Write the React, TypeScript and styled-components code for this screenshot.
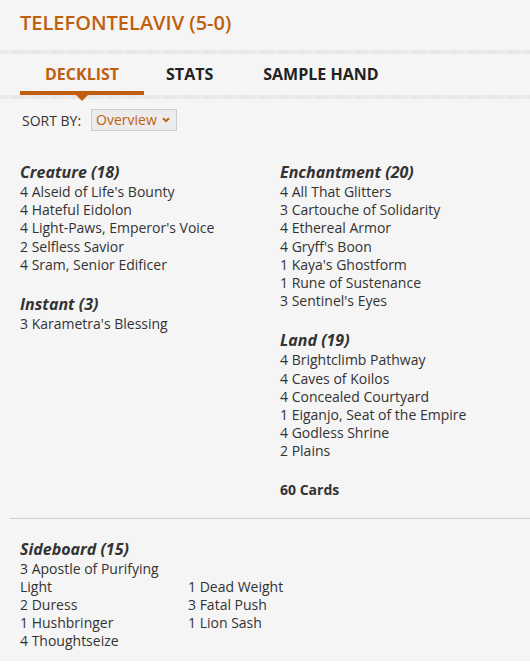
import React from "react";
import styled, { createGlobalStyle } from "styled-components";

const Global = createGlobalStyle`
  html, body { margin: 0; padding: 0; background: #ffffff; }
  body { font-family: "Open Sans", "Noto Sans", sans-serif; color: #333; }
  * { box-sizing: border-box; }
`;

const ORANGE = "#c0600f";

const Page = styled.div`
  background: #f5f5f5;
  padding-bottom: 10px;
`;

const Title = styled.h1`
  margin: 0;
  padding: 10px 20px 14px;
  font-size: 20px;
  line-height: 26px;
  font-weight: 600;
  color: ${ORANGE};
`;

const Band = styled.div`
  height: 4px;
  background: repeating-linear-gradient(90deg, #e9e9e9 0 7px, #ececec 7px 13px, #e7e7e7 13px 19px);
`;

const Tabs = styled.nav`
  display: flex;
  padding-left: 20px;
`;

const Tab = styled.div<{ $active?: boolean; $pad: number }>`
  position: relative;
  padding: 9px ${(p) => p.$pad}px 6px;
  font-size: 16px;
  line-height: 22px;
  font-weight: 700;
  color: ${(p) => (p.$active ? ORANGE : "#222")};
  border-bottom: 4px solid ${(p) => (p.$active ? ORANGE : "transparent")};
  &::after {
    content: "";
    display: ${(p) => (p.$active ? "block" : "none")};
    position: absolute;
    left: 50%;
    bottom: -10px;
    margin-left: -6px;
    border-left: 6px solid transparent;
    border-right: 6px solid transparent;
    border-top: 6px solid ${ORANGE};
    z-index: 1;
  }
`;

const SortRow = styled.div`
  display: flex;
  align-items: center;
  gap: 10px;
  padding: 10px 22px 0;
  font-size: 14px;
  color: #333;
`;

const Select = styled.div`
  display: flex;
  align-items: center;
  gap: 5px;
  height: 22px;
  padding: 0 6px 0 4px;
  border: 1px solid #ccc;
  background: #ececec;
  color: ${ORANGE};
  font-size: 14px;
  line-height: 20px;
`;

const Columns = styled.div`
  display: grid;
  grid-template-columns: 260px 250px;
  padding: 31px 20px 19px;
`;

const Section = styled.section`
  margin-bottom: 20px;
`;

const Heading = styled.h3`
  margin: 0 0 1px;
  font-size: 16px;
  line-height: 20px;
  font-weight: 700;
  font-style: italic;
  color: #333;
`;

const Item = styled.div`
  font-size: 14px;
  line-height: 18.2px;
  color: #333;
`;

const Total = styled.div`
  font-size: 14px;
  line-height: 18px;
  font-weight: 700;
  color: #333;
`;

const Divider = styled.hr`
  margin: 0 0 0 10px;
  border: 0;
  border-top: 1px solid #cfcfcf;
`;

const Sideboard = styled.div`
  padding: 20px 20px 0;
`;

const SideGrid = styled.div`
  width: 336px;
  font-size: 0;
`;

const SideItem = styled.div`
  display: inline-block;
  vertical-align: baseline;
  width: 168px;
  font-size: 14px;
  line-height: 18.2px;
  color: #333;
`;

const Chevron = () => (
  <svg width="8" height="6" viewBox="0 0 8 6">
    <path d="M1 1.2 L4 4.2 L7 1.2" fill="none" stroke={ORANGE} strokeWidth="2" />
  </svg>
);

const left = [
  { title: "Creature (18)", items: ["4 Alseid of Life's Bounty", "4 Hateful Eidolon", "4 Light-Paws, Emperor's Voice", "2 Selfless Savior", "4 Sram, Senior Edificer"] },
  { title: "Instant (3)", items: ["3 Karametra's Blessing"] },
];
const right = [
  { title: "Enchantment (20)", items: ["4 All That Glitters", "3 Cartouche of Solidarity", "4 Ethereal Armor", "4 Gryff's Boon", "1 Kaya's Ghostform", "1 Rune of Sustenance", "3 Sentinel's Eyes"] },
  { title: "Land (19)", items: ["4 Brightclimb Pathway", "4 Caves of Koilos", "4 Concealed Courtyard", "1 Eiganjo, Seat of the Empire", "4 Godless Shrine", "2 Plains"] },
];
const side = ["3 Apostle of Purifying Light", "1 Dead Weight", "2 Duress", "3 Fatal Push", "1 Hushbringer", "1 Lion Sash", "4 Thoughtseize"];

const Group = ({ g }: { g: { title: string; items: string[] } }) => (
  <Section>
    <Heading>{g.title}</Heading>
    {g.items.map((i) => (
      <Item key={i}>{i}</Item>
    ))}
  </Section>
);

export default function App() {
  return (
    <Page>
      <Global />
      <Title>TELEFONTELAVIV (5-0)</Title>
      <Band />
      <Tabs>
        <Tab $active $pad={25}>DECKLIST</Tab>
        <Tab $pad={22}>STATS</Tab>
        <Tab $pad={28}>SAMPLE HAND</Tab>
      </Tabs>
      <Band />
      <SortRow>
        SORT BY:
        <Select>
          Overview <Chevron />
        </Select>
      </SortRow>
      <Columns>
        <div>
          {left.map((g) => (
            <Group key={g.title} g={g} />
          ))}
        </div>
        <div>
          {right.map((g) => (
            <Group key={g.title} g={g} />
          ))}
          <Total>60 Cards</Total>
        </div>
      </Columns>
      <Divider />
      <Sideboard>
        <Heading>Sideboard (15)</Heading>
        <SideGrid>
          {side.map((s) => (
            <SideItem key={s}>{s}</SideItem>
          ))}
        </SideGrid>
      </Sideboard>
    </Page>
  );
}
